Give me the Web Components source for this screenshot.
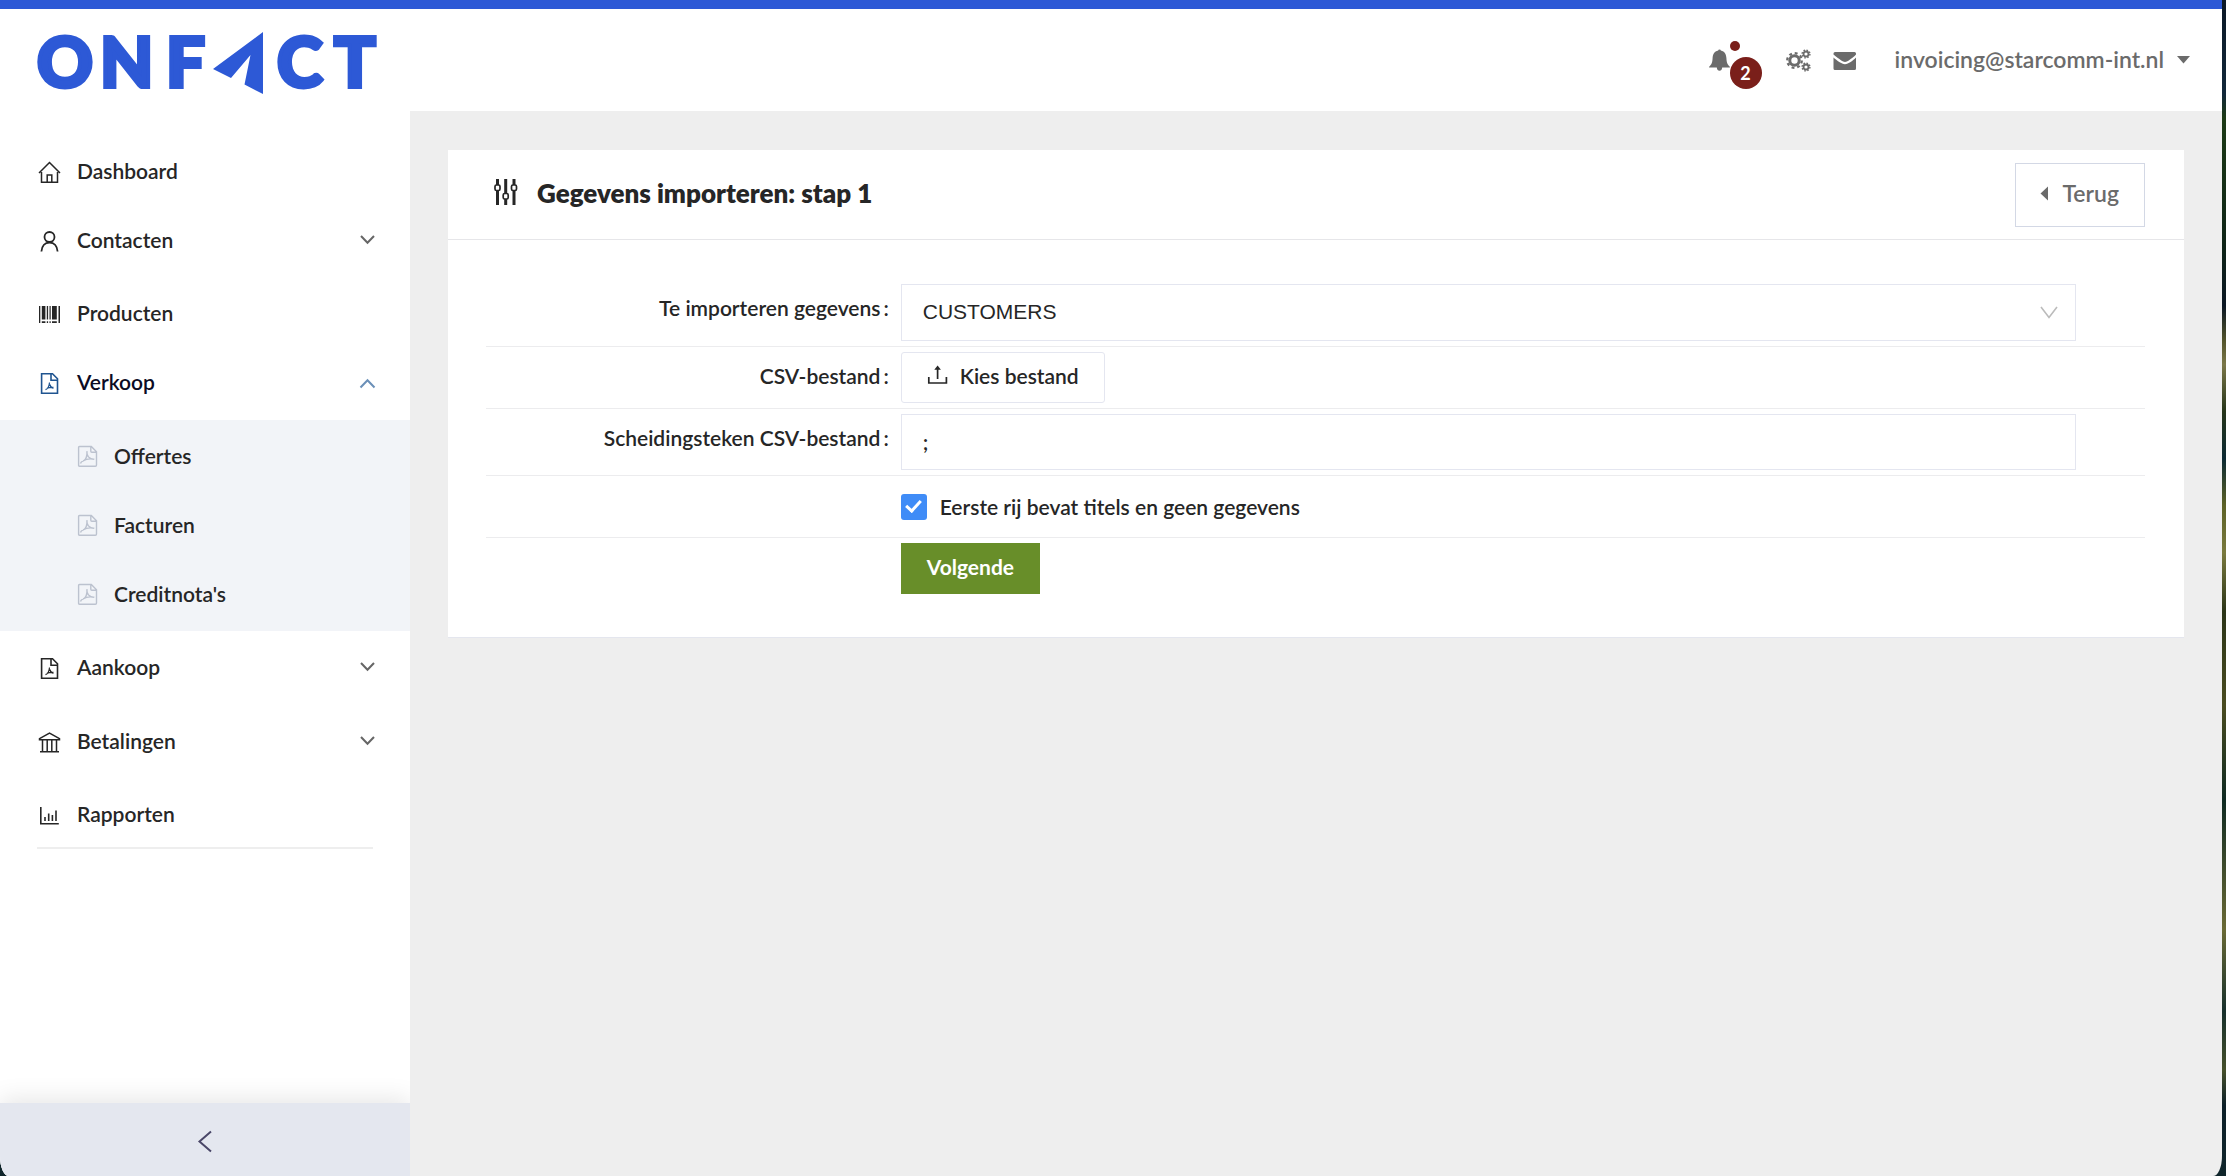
<!DOCTYPE html>
<html lang="nl">
<head>
<meta charset="utf-8">
<title>OnFact - Gegevens importeren</title>
<style>
html, body { margin: 0; height: 100%; }
body { background: #10262b; font-family: Lato, "Open Sans", sans-serif; font-size: 21px; font-weight: 600; color: #262626; }
</style>
</head>
<body>
<app-shell></app-shell>
<script>
const define = (name, html, setup) => {
  const template = document.createElement('template');
  template.innerHTML = html;
  customElements.define(name, class extends HTMLElement {
    connectedCallback() {
      if (this.shadowRoot) return;
      this.attachShadow({ mode: 'open' }).append(template.content.cloneNode(true));
      if (setup) setup(this, this.shadowRoot);
    }
  });
};

const line = 'fill="none" stroke="currentColor"';
const ICONS = {
  home: `<g ${line} stroke-width="1.5"><path d="M1 12 11.500 1.500 22 12M3.500 11v10.200h16V11M9.200 21v-7h4.600v7"/></g>`,
  user: `<g ${line} stroke-width="1.8"><circle cx="11.500" cy="7" r="5"/><path d="M3.400 21.500c.4-5.500 3.600-9 8.100-9s7.700 3.500 8.100 9"/></g>`,
  barcode: '<path fill="currentColor" d="M1 3h1.300v17H1zM3.800 3h3.600v13.500H3.800zM8.800 3h1.300v13.500H8.800zM11.500 3h1.200v13.500h-1.200zM14 3h4.800v13.500H14zM20.500 3H22v17h-1.500zM3.800 18.200h3.600V20H3.800zM8.800 18.200h1.300V20H8.800zM11.500 18.200h1.200V20h-1.200zM14 18.200h4.800V20H14z"/>',
  pdf: `<g ${line}><path stroke-width="1.6" d="M3.600 1.800h10.900l5 5v14.400H3.600zM13 2v6.200h6.300"/><path stroke-width="1.200" d="M11.500 10.500c-.4 4-1.500 6.500-4 7.200M11.800 12.500c.8 2.500 2 3.700 3.700 3.600M9 16.300c2-.9 4-1.200 6.500-.9"/></g>`,
  pdfsoft: `<g ${line} stroke-width="1.400"><path d="M3.500 1.500h11.800l5.200 5.200v13.400q0 1.200-1.200 1.200H3.500q-.9 0-.9-1V2.500q0-1 .9-1zM14.800 1.700v4.500q0 1 1 1h4.500"/><path d="M4.500 18.500q.4-2 3-2.600c2.400-1 4-5.500 3.400-9.700M10.900 6.200c-.4 4.500 2 8 7.400 8.200M7 15.800c3-1.700 7-2.400 11.300-1.500"/></g>`,
  bank: `<g ${line} stroke-width="1.500"><path d="M1.500 8.700v-1l10-5.500 10 5.500v1zM2 20.700h19M4.500 9v11.500M9.200 9v11.500M13.800 9v11.500M18.500 9v11.500"/></g>`,
  chart: `<g ${line} stroke-width="1.600"><path d="M2.800 3v16.700h18M7 17v-4M10.700 17V9.500M14.400 17v-6M18 17V6.500"/></g>`,
  down: `<path ${line} stroke-width="2" d="m5 8 6.500 6.800L18 8"/>`,
  up: `<path ${line} stroke-width="2" d="m4.500 15.500 7-7.300 7 7.300"/>`,
  thin: `<path ${line} stroke-width="1.600" d="m4 6 8 10.400L20 6"/>`,
  back: `<path ${line} stroke-width="2" d="M17 1.500 5.500 11.500 17 21.500"/>`,
  upload: `<g ${line} stroke-width="1.700"><path d="M2.800 13v6h17.600v-6M11.600 15V4"/></g><path fill="currentColor" d="m11.600 1.500 3.300 4.300H8.300z"/>`,
  sliders: `<g ${line} stroke-width="3"><path d="M3.500-1v6M3.500 11v14M11.700-1v14M11.700 19v6M20-1v6M20 11v14"/></g><g ${line} stroke-width="1.700"><rect x="1" y="5" width="5" height="5.500" rx="1.500"/><rect x="9.200" y="13.500" width="5" height="5.500" rx="1.500"/><rect x="17.500" y="5" width="5" height="5.500" rx="1.500"/></g>`,
  bell: '<path fill="currentColor" d="M10.200 1.500q0-1 1.300-1t1.300 1c4 1 5.400 3.800 5.600 7.500.2 4.500 1 6.500 3.500 8.700v.8h-7.700q-.4 3.300-2.700 3.300T8.800 18.500H1.100v-.8C3.600 15.500 4.400 13.500 4.600 9c.2-3.700 1.600-6.500 5.600-7.500z"/>',
  mail: '<path fill="currentColor" d="M2 3h19.500q1.500 0 1.500 1.500v1q-1 1.600-3.500 3.300c-2.500 1.600-5 4.200-7.500 4.200S7 10.400 4.500 8.800Q2 7.100.5 5.500v-1Q.5 3 2 3zM.5 8.500c3.500 3 8 6.700 11.500 6.700s8-3.700 11-6.700v11q0 1.500-1.500 1.500H2Q.5 21 .5 19.500z"/>',
  gears: `<g ${line}><circle cx="8.500" cy="11.500" r="4.700" stroke-width="3"/><circle cx="8.500" cy="11.500" r="7.300" stroke-width="2.200" stroke-dasharray="2.900 2.833"/><circle cx="20" cy="5" r="2.500" stroke-width="1.800"/><circle cx="20" cy="5" r="3.900" stroke-width="1.400" stroke-dasharray="1.600 1.463"/><circle cx="20" cy="18" r="2.500" stroke-width="1.800"/><circle cx="20" cy="18" r="3.900" stroke-width="1.400" stroke-dasharray="1.600 1.463"/></g>`,
  caret: '<path fill="currentColor" d="M5 8h13l-6.500 7.500z"/>',
  left: '<path fill="currentColor" d="M16 4.500v14L8.500 11.500z"/>'
};

define('ui-icon', `<style>
:host { display: block; flex: none; width: 23px; height: 23px; }
svg { display: block; width: 100%; height: 100%; overflow: visible; }
</style><svg viewBox="0 0 23 23" aria-hidden="true"></svg>`, (host, root) => {
  root.querySelector('svg').innerHTML = ICONS[host.getAttribute('name')];
});

define('brand-logo', `<style>
:host { display: block; width: 340px; height: 62px; margin-top: 6px; }
svg { display: block; overflow: visible; }
text { font: 900 69px Lato, sans-serif; stroke: #2d59d6; stroke-width: 4px; stroke-linejoin: miter; }
</style><svg width="340" height="62" viewBox="0 0 340 62" fill="#2d59d6" role="img" aria-label="ONFACT">
<text x="0" y="55">O</text><text x="63" y="55">N</text><text x="129" y="55">F</text>
<path d="M226 0v62l-18.500-9.500L213.500 23 194 46l-18-9z"/>
<text x="240" y="55">C</text><text x="297" y="55">T</text></svg>`);

define('app-header', `<style>
:host { display: flex; align-items: center; justify-content: space-between; height: 111px; padding: 0 27px 0 37px; border-top: 9px solid #2d59d6; background: #fff; box-sizing: border-box; color: #6b6b6b; }
a { color: inherit; text-decoration: none; }
.tools { display: flex; align-items: center; }
.tools a { display: block; position: relative; }
.bell { margin-right: 55px; }
.gears { margin-right: 24px; }
.mail { margin-right: 39px; }
.dot, .badge { position: absolute; border-radius: 50%; background: #7a1f1a; }
.dot { left: 22px; top: -8px; width: 10px; height: 10px; }
.badge { left: 22px; top: 8px; width: 32px; height: 32px; color: #fff; font-size: 18px; font-weight: 700; line-height: 32px; text-align: center; }
button { display: flex; align-items: center; gap: 8px; border: 0; padding: 0 0 2px; background: none; font: inherit; font-size: 23px; color: inherit; }
</style>
<a href="#" aria-label="OnFact"><brand-logo></brand-logo></a>
<div class="tools">
<a class="bell" href="#" aria-label="Meldingen"><ui-icon name="bell"></ui-icon><span class="dot"></span><span class="badge">2</span></a>
<a class="gears" href="#" aria-label="Instellingen"><ui-icon name="gears"></ui-icon></a>
<a class="mail" href="#" aria-label="Berichten"><ui-icon name="mail"></ui-icon></a>
<button type="button">invoicing@starcomm-int.nl<ui-icon name="caret"></ui-icon></button>
</div>`);

define('nav-item', `<style>
:host { display: block; }
a { display: flex; align-items: center; height: 68px; padding: 4px 31px 0 38px; box-sizing: border-box; color: #262626; text-decoration: none; }
:host([group]) a { height: 74px; padding-top: 0; }
:host([sub]) a { height: 69px; padding: 0 31px 0 76px; }
:host([sub]) .icon { color: #bcc2cf; }
:host([active]) a { color: #0b0b24; }
:host([active]) .icon { color: #1f5490; }
:host([active]) .arrow { color: #6b90b8; margin-bottom: 0; }
.text { flex: 1; margin-left: 16px; padding-bottom: 3px; }
:host([sub]) .text { margin-left: 15px; }
.arrow { color: #666; margin-bottom: 4px; }
</style><a href="#"><span class="text"><slot></slot></span></a>`, (host, root) => {
  const add = (name, cls, where) => {
    const icon = document.createElement('ui-icon');
    icon.setAttribute('name', name);
    icon.className = cls;
    root.querySelector('a')[where](icon);
  };
  add(host.getAttribute('icon'), 'icon', 'prepend');
  if (host.hasAttribute('group')) add(host.hasAttribute('active') ? 'up' : 'down', 'arrow', 'append');
});

define('side-nav', `<style>
:host { display: flex; flex-direction: column; width: 410px; flex: none; background: #fff; }
nav { flex: 1; padding-top: 25px; }
.sub { padding: 2px 0; background: #f2f4f8; }
hr { height: 2px; margin: 0 37px; border: 0; background: #eee; }
button { display: flex; align-items: center; justify-content: center; height: 73px; border: 0; padding: 3px 0 0; background: #e4e7ef; color: #4a4768; box-shadow: 0 -4px 24px rgba(0,0,0,.1); clip-path: inset(-40px 0 0 0); }
</style>
<nav aria-label="Hoofdmenu">
<nav-item icon="home">Dashboard</nav-item>
<nav-item icon="user" group>Contacten</nav-item>
<nav-item icon="barcode">Producten</nav-item>
<nav-item icon="pdf" group active>Verkoop</nav-item>
<div class="sub">
<nav-item icon="pdfsoft" sub>Offertes</nav-item>
<nav-item icon="pdfsoft" sub>Facturen</nav-item>
<nav-item icon="pdfsoft" sub>Creditnota's</nav-item>
</div>
<nav-item icon="pdf" group>Aankoop</nav-item>
<nav-item icon="bank" group>Betalingen</nav-item>
<nav-item icon="chart">Rapporten</nav-item>
<hr>
</nav>
<button type="button" aria-label="Menu inklappen"><ui-icon name="back"></ui-icon></button>`);

define('panel-card', `<style>
:host { display: block; background: #fff; border-bottom: 1px solid #e4e6ee; }
header { display: flex; align-items: center; gap: 20px; height: 90px; padding: 0 39px 0 46px; box-sizing: border-box; border-bottom: 1px solid #e6e6e9; }
ui-icon { margin-bottom: 6px; }
h1 { flex: 1; margin: 0; padding-bottom: 3px; font-size: 26px; font-weight: 800; }
.body { padding: 39px 39px 38px 38px; }
</style><header><ui-icon name="sliders"></ui-icon><h1><slot name="title"></slot></h1><slot name="action"></slot></header><div class="body"><slot></slot></div>`);

define('form-row', `<style>
:host { display: flex; align-items: flex-start; padding: 5px 0; border-bottom: 1px solid #ececee; }
:host([last]) { border-bottom: 0; }
.label { flex: 0 0 25%; display: flex; justify-content: flex-end; padding-right: 12px; box-sizing: border-box; line-height: 48px; }
.field { flex: 0 0 calc(100% * 17 / 24); min-width: 0; }
</style><div class="label"><slot name="label"></slot></div><div class="field"><slot></slot></div>`);

define('import-form', `<style>
:host { display: block; }
form { margin: 0; }
label i { font-style: normal; margin-left: 3px; }
.select { position: relative; }
.select ui-icon { position: absolute; right: 16px; top: 17px; color: #bbb; pointer-events: none; }
select, input[type=text] { display: block; width: 100%; box-sizing: border-box; border: 1px solid #e4e6f0; border-radius: 0; background: #fff; color: #262626; padding: 0 21px 2px; }
select { height: 57px; appearance: none; font: 21px "Liberation Sans", sans-serif; }
input[type=text] { height: 56px; font: inherit; }
button { display: flex; align-items: center; height: 51px; box-sizing: border-box; padding: 0 26px 4px; font: inherit; }
.file { gap: 11px; padding: 0 25px 4px 24px; border: 1px solid #e4e6f0; border-radius: 3px; background: #fff; color: #262626; }
.submit { border: 0; background: #688e29; color: #fff; font-weight: 700; }
.check { display: flex; align-items: center; gap: 13px; height: 51px; }
input[type=checkbox] { appearance: none; flex: none; width: 26px; height: 26px; margin: 0; border-radius: 3px; background: #3f8cf7; display: grid; place-items: center; }
input[type=checkbox]::before { content: ""; width: 6px; height: 12px; margin-top: -4px; border: solid #fff; border-width: 0 3px 3px 0; transform: rotate(42deg); }
</style><form>
<form-row><label slot="label" for="data">Te importeren gegevens<i>:</i></label>
<div class="select"><select id="data"><option>CUSTOMERS</option></select><ui-icon name="thin"></ui-icon></div></form-row>
<form-row><label slot="label" for="file">CSV-bestand<i>:</i></label>
<button class="file" id="file" type="button"><ui-icon name="upload"></ui-icon>Kies bestand</button></form-row>
<form-row><label slot="label" for="sep">Scheidingsteken CSV-bestand<i>:</i></label>
<input id="sep" type="text" value=";"></form-row>
<form-row><div class="check"><input id="first" type="checkbox" checked><label for="first">Eerste rij bevat titels en geen gegevens</label></div></form-row>
<form-row last><button class="submit" type="button">Volgende</button></form-row>
</form>`);

define('back-button', `<style>
:host { display: block; }
button { display: flex; align-items: center; gap: 7px; height: 64px; padding: 0 25px 3px 16px; border: 1px solid #d3d8e5; background: #fff; color: #6b6b6b; font: inherit; font-size: 23px; }
</style><button type="button"><ui-icon name="left"></ui-icon><slot></slot></button>`);

define('app-shell', `<style>
:host { display: block; min-height: 100vh; padding-right: 4px; box-sizing: border-box; background: linear-gradient(#0b1826 0, #12283a 8%, #1d3b16 10%, #0e2417 21%, #0b1724 26%, #54552c 29%, #7b7748 31%, #26351a 35%, #0c2a33 39%, #5d6226 43%, #7a7a3e 47%, #2b3518 52%, #4a4c20 60%, #0f2a22 68%, #6a6a35 79%, #17302c 86%, #46502b 91%, #0d2029 94%, #10262b); }
.window { display: flex; flex-direction: column; min-height: 100vh; background: #eee; border-radius: 0 0 9px 9px / 0 0 20px 20px; overflow: hidden; }
.cols { display: flex; flex: 1; }
main { flex: 1; min-width: 0; padding: 39px 38px; }
</style><div class="window"><app-header></app-header><div class="cols"><side-nav></side-nav><main>
<panel-card><span slot="title">Gegevens importeren: stap 1</span><back-button slot="action">Terug</back-button><import-form></import-form></panel-card>
</main></div></div>`);
</script>
</body>
</html>
